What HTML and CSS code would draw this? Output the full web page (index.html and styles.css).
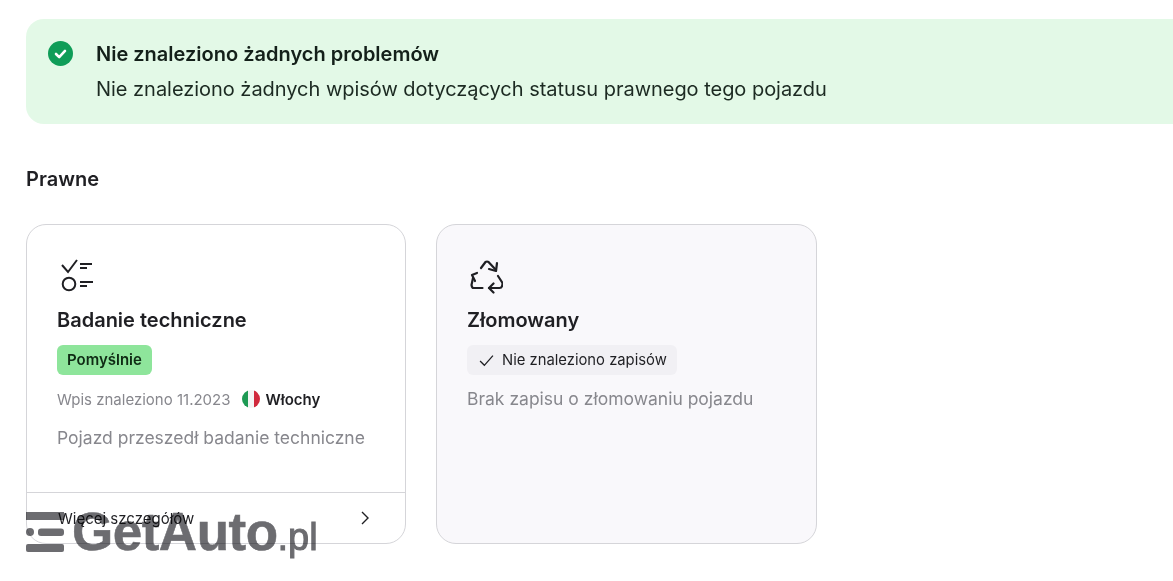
FILE: index.html
```html
<!DOCTYPE html>
<html lang="pl">
<head>
    <meta charset="UTF-8">
    <title>Prawne</title>
    <link rel="stylesheet" href="styles.css">
</head>
<body>
<div class="page">
    <div class="banner">
        <svg class="banner-icon" viewBox="0 0 25 25">
            <circle cx="12.5" cy="12.5" r="12.5" fill="#0f9d58"/>
            <path d="M8 13l3.200 3.100 5.800-6.200" fill="none" stroke="#fff" stroke-width="2.600" stroke-linecap="round" stroke-linejoin="round"/>
        </svg>
        <div>
            <div class="banner-title">Nie znaleziono żadnych problemów</div>
            <div class="banner-text">Nie znaleziono żadnych wpisów dotyczących statusu prawnego tego pojazdu</div>
        </div>
    </div>

    <h2 class="section-title">Prawne</h2>

    <div class="cards">
        <div class="card">
            <div class="card-body">
                <svg class="card-icon" viewBox="0 0 36 36" fill="none" stroke="#1f1f23" stroke-width="2">
                    <path d="M5 7l6 7 9-12"/>
                    <path d="M23 6h12M23 10h7"/>
                    <circle cx="12" cy="26" r="6.300"/>
                    <path d="M23 24h13M23 28h7"/>
                </svg>
                <h3 class="card-title">Badanie techniczne</h3>
                <span class="badge">Pomyślnie</span>
                <div class="meta">
                    <span>Wpis znaleziono 11.2023</span>
                    <span class="flag"><i class="green"></i><i class="white"></i><i class="red"></i></span>
                    <b>Włochy</b>
                </div>
                <p class="desc">Pojazd przeszedł badanie techniczne</p>
            </div>
            <div class="card-footer">
                <span>Więcej szczegółów</span>
                <svg class="chevron" viewBox="0 0 14 14" fill="none" stroke="#1f1f23" stroke-width="1.400">
                    <path d="M4 1l6 6-6 6"/>
                </svg>
            </div>
        </div>

        <div class="card card-muted">
            <div class="card-body">
                <svg class="card-icon" viewBox="0 0 36 36" fill="none" stroke="#1f1f23" stroke-width="2.200" stroke-linecap="round" stroke-linejoin="round">
                    <path d="M14 10l4.500-6q1.500-1 3 0l7.500 8"/>
                    <path d="M30 5l-1 8-7-2"/>
                    <path d="M6 20L4.500 27q.5 3 2 3h9"/>
                    <path d="M10 15l-5 2 3 6"/>
                    <path d="M31 18l4.500 7q0 5-3 5H22"/>
                    <path d="M26.500 25.500l-4.500 4.500 4.500 4.500"/>
                </svg>
                <h3 class="card-title">Złomowany</h3>
                <span class="tag">
                    <svg class="tag-check" viewBox="0 0 14 14" fill="none" stroke="#1f1f23" stroke-width="1.200">
                        <path d="M1 7.500l4 4 8-9"/>
                    </svg>
                    Nie znaleziono zapisów
                </span>
                <p class="desc desc-tight">Brak zapisu o złomowaniu pojazdu</p>
            </div>
        </div>
    </div>
</div>

<div class="logo">
    <svg class="logo-mark" viewBox="0 0 38 40" fill="#6c6c70">
        <rect x="0" y="0" width="38" height="8"/>
        <circle cx="4" cy="20" r="4"/>
        <rect x="12" y="16.500" width="26" height="7.500" rx="3"/>
        <rect x="0" y="32" width="38" height="8" rx="2"/>
    </svg>
    <span class="logo-name">GetAuto</span><span class="logo-tld">.pl</span>
</div>
</body>
</html>
```

FILE: styles.css
```css
*{
    margin: 0;
    padding: 0;
    box-sizing: border-box;
}
html,
body{
    height: 100%;
    overflow: hidden;
}
body{
    background: #fff;
    font-family: Inter, "Liberation Sans", sans-serif;
    color: #1f1f23;
    position: relative;
}
.page{
    padding: 19px 0 0 26px;
}
.banner{
    display: flex;
    gap: 23px;
    height: 105px;
    margin-right: -40px;
    padding: 22px 22px 0;
    background: #e3f9e7;
    border-radius: 18px;
}
.banner-icon{
    width: 25px;
    height: 25px;
    flex: none;
}
.banner-title{
    font-size: 20px;
    font-weight: 600;
    line-height: 26px;
    color: #14201a;
}
.banner-text{
    margin-top: 9px;
    font-size: 20px;
    letter-spacing: -0.03px;
    line-height: 26px;
    color: #1c2a22;
}
.section-title{
    margin-top: 42px;
    font-size: 20px;
    font-weight: 600;
    line-height: 26px;
}
.cards{
    display: flex;
    gap: 30px;
    margin-top: 32px;
}
.card{
    display: flex;
    flex-direction: column;
    justify-content: space-between;
    width: 380px;
    height: 320px;
    background: #fff;
    border: 1px solid #d5d5d9;
    border-radius: 20px;
}
.card-muted{
    width: 381px;
    background: #f9f8fb;
}
.card-body{
    display: flex;
    flex-direction: column;
    align-items: flex-start;
    padding: 33px 30px 0;
}
.card-icon{
    width: 36px;
    height: 36px;
}
.card-title{
    margin-top: 12px;
    font-size: 20px;
    font-weight: 600;
    line-height: 28px;
}
.badge{
    margin-top: 11px;
    padding: 0 10px;
    height: 30px;
    line-height: 30px;
    font-size: 15px;
    font-weight: 600;
    color: #0f2b14;
    background: #8ee59b;
    border-radius: 6px;
}
.tag{
    display: flex;
    align-items: center;
    gap: 8px;
    margin-top: 11px;
    padding: 0 10px 0 12px;
    height: 30px;
    font-size: 14.800px;
    background: #f1f0f4;
    border-radius: 6px;
}
.tag-check{
    width: 15px;
    height: 15px;
}
.meta{
    display: flex;
    align-items: center;
    margin-top: 14px;
    height: 20px;
    font-size: 15px;
    color: #87878d;
}
.meta b{
    font-weight: 600;
    color: #1f1f23;
}
.flag{
    display: flex;
    width: 18px;
    height: 18px;
    margin: 0 6px 0 11px;
    border-radius: 50%;
    overflow: hidden;
}
.flag i{
    flex: 1;
}
.flag .green{
    background: #1e9a54;
}
.flag .white{
    background: #f4f4f4;
}
.flag .red{
    background: #d0293c;
}
.desc{
    margin-top: 17px;
    font-size: 17.500px;
    line-height: 24px;
    color: #87878d;
}
.desc-tight{
    margin-top: 12px;
}
.card-footer{
    display: flex;
    align-items: center;
    justify-content: space-between;
    height: 51px;
    padding: 0 33px 0 31px;
    border-top: 1px solid #d5d5d9;
    font-size: 15px;
}
.chevron{
    width: 14px;
    height: 14px;
}
.logo{
    position: absolute;
    left: 26px;
    top: 508px;
    display: flex;
    align-items: baseline;
    color: #6c6c70;
    font-family: "Liberation Sans", sans-serif;
    font-weight: 700;
    line-height: 48px;
    mix-blend-mode: multiply;
}
.logo-mark{
    width: 38px;
    height: 40px;
    margin-right: 8px;
    align-self: flex-start;
    margin-top: 4px;
}
.logo-name{
    font-size: 53px;
    letter-spacing: -0.5px;
    -webkit-text-stroke: 0.5px #6c6c70;
}
.logo-tld{
    font-size: 38px;
    font-weight: 400;
    -webkit-text-stroke: 1px #6c6c70;
}
```
